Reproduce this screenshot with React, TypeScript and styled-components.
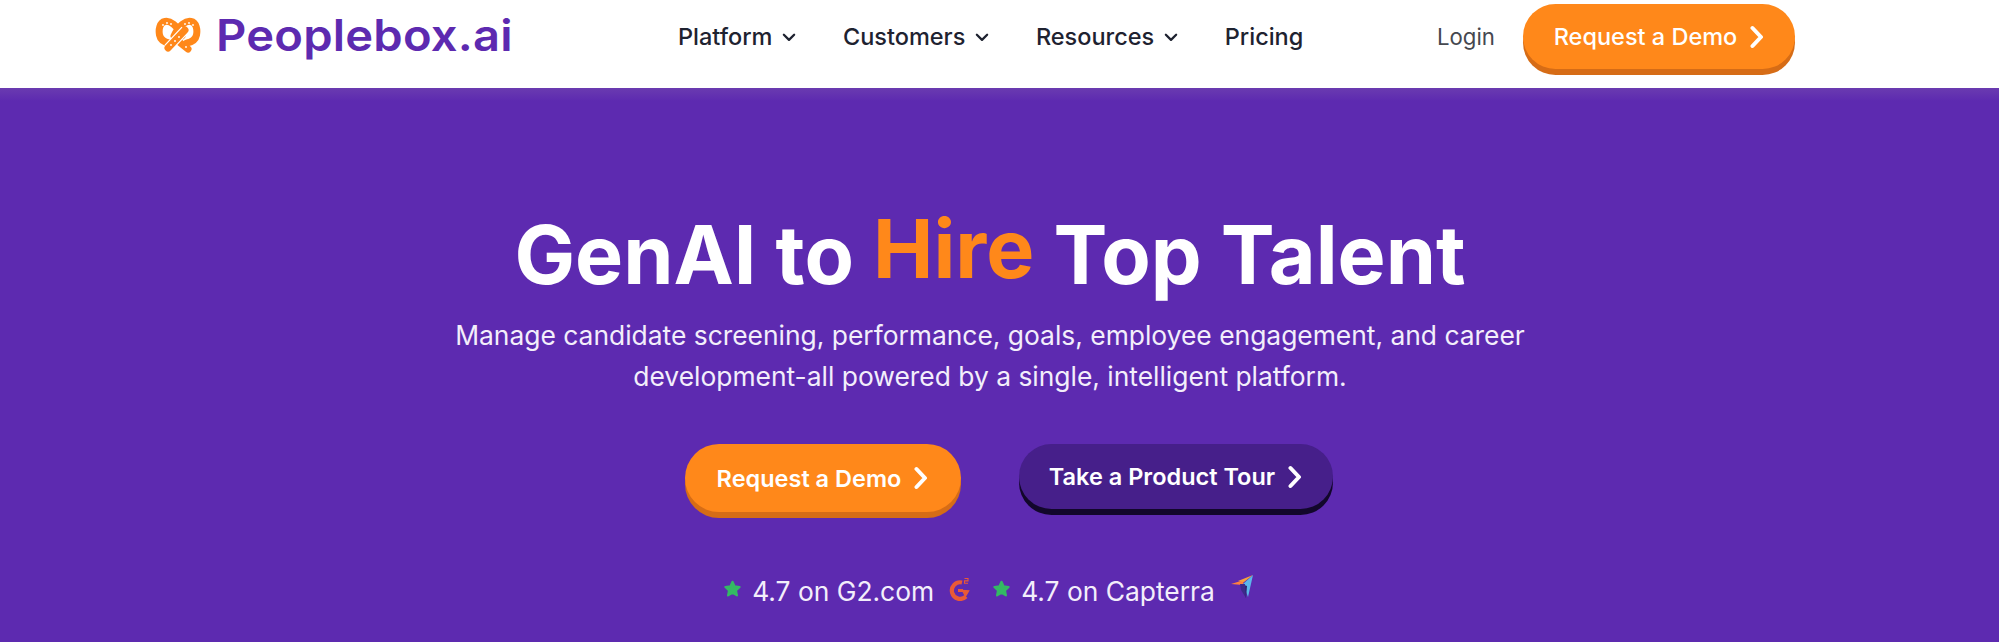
import React from "react";
import styled, { createGlobalStyle } from "styled-components";

const Global = createGlobalStyle`
  html, body { margin: 0; padding: 0; background: #5d2ab0; }
  body { width: 1999px; height: 642px; overflow: hidden; font-family: Inter, "Liberation Sans", sans-serif; }
`;

const Page = styled.div`
  width: 1999px;
  height: 642px;
  display: flex;
  flex-direction: column;
  overflow: hidden;
`;

const Header = styled.header`
  height: 88px;
  flex: none;
  background: #fff;
  display: flex;
  align-items: flex-start;
  padding-left: 155px;
  box-sizing: border-box;
`;

const LogoLink = styled.a`
  display: flex;
  align-items: center;
  gap: 15px;
  width: 523px;
  height: 70px;
  flex: none;
`;

const LogoText = styled.span`
  display: inline-block;
  font-family: Inter, sans-serif;
  font-weight: 600;
  font-size: 44px;
  letter-spacing: 0.2px;
  line-height: 70px;
  color: #5d2ab0;
  transform: scaleX(1.07);
  transform-origin: left center;
`;

const Nav = styled.nav`
  display: flex;
  align-items: center;
  gap: 45.5px;
  height: 73px;
  width: 759px;
  flex: none;
`;

const NavItem = styled.a`
  display: flex;
  align-items: center;
  gap: 9px;
  font-size: 23.5px;
  font-weight: 450;
  color: #1e2230;
`;

const Login = styled.a`
  width: 86px;
  flex: none;
  height: 74px;
  line-height: 74px;
  font-size: 22.2px;
  color: #45484f;
`;

const Button = styled.a<{ $dark?: boolean; $w: number; $h: number }>`
  display: flex;
  align-items: center;
  justify-content: center;
  gap: 13px;
  flex: none;
  box-sizing: border-box;
  width: ${(p) => p.$w}px;
  height: ${(p) => p.$h}px;
  border-radius: 36px;
  background: ${(p) => (p.$dark ? "#461f8a" : "#ff881a")};
  box-shadow: 0 6px 0 ${(p) => (p.$dark ? "#12072b" : "#d66c16")};
  color: #fff;
  font-size: 23.5px;
  font-weight: 600;
`;

const HeaderButton = styled(Button)`
  margin: 4px 0 0 0;
  font-weight: 500;
`;

const Hero = styled.main`
  flex: 1;
  background: linear-gradient(#6a3bb0 0, #5d2ab0 13px);
  display: flex;
  flex-direction: column;
  align-items: center;
  padding-top: 127px;
  box-sizing: border-box;
`;

const Title = styled.h1`
  margin: 0 19px 0 0;
  font-size: 80.8px;
  line-height: 80px;
  height: 80px;
  font-weight: 700;
  color: #fff;
  white-space: pre;
`;

const Accent = styled.span`
  display: inline-block;
  color: #ff881a;
  transform: translateY(-6px);
`;

const Subtitle = styled.p`
  margin: 20px 19px 0 0;
  width: 1100px;
  font-size: 26.4px;
  line-height: 40.5px;
  text-align: center;
  color: #f3eefb;
`;

const Actions = styled.div`
  display: flex;
  gap: 58px;
  margin: 48px 0 0 18px;
  align-items: flex-start;
`;

const Ratings = styled.div`
  display: flex;
  align-items: center;
  margin: 59px 21px 0 0;
  font-size: 26.4px;
  color: #f3eefb;
  height: 40px;
`;

const Rating = styled.div`
  display: flex;
  align-items: center;
  gap: 11px;
`;

const RatingLabel = styled.span`
  margin-right: 4px;
`;

const BadgeIcon = styled.svg<{ $lift?: number }>`
  margin-top: ${(p) => p.$lift ?? -5}px;
  flex: none;
`;

const RatingGap = styled.div`
  width: 22px;
  flex: none;
`;

const Chevron = ({ size = 16 }: { size?: number }) => (
  <svg width={size} height={size} viewBox="0 0 14 14" fill="none" stroke="#1e2230" strokeWidth="2" strokeLinecap="round" strokeLinejoin="round">
    <path d="M2.5 5l4.5 4.5L11.5 5" />
  </svg>
);

const Arrow = () => (
  <svg width="14" height="24" viewBox="0 0 14 24" fill="none" stroke="#fff" strokeWidth="4" strokeLinecap="round" strokeLinejoin="round">
    <path d="M2.5 3l8.5 9-8.5 9" />
  </svg>
);

const Star = () => (
  <BadgeIcon $lift={-6} width="17" height="17" viewBox="0 0 24 24" fill="#34b964">
    <path d="M12 2.5l3 6.5 7 .9-5.1 4.8 1.4 7L12 18.2l-6.3 3.5 1.4-7L2 9.9l7-.9z" stroke="#34b964" strokeWidth="3" strokeLinejoin="round" />
  </BadgeIcon>
);

const Pretzel = () => (
  <svg width="46" height="36" viewBox="0 0 46 36" fill="none">
    <g stroke="#ff881a" strokeLinecap="round" fill="none">
      <path d="M27 19 C22 8 15 3.5 10 4.5 C4.5 5.5 3.5 13 4.5 18 C5.5 23 9 25 14 26" strokeWidth="7" />
      <path d="M19 19 C24 8 31 3.5 36 4.5 C41.5 5.5 42.5 13 41.5 18 C40.5 23 37 25 32 26" strokeWidth="7" />
      <path d="M23 24 L33 32" strokeWidth="7" />
      <path d="M30 13 L13 31" stroke="#fff" strokeWidth="9.5" strokeLinecap="butt" />
      <path d="M30 13 L13 31" strokeWidth="7" />
    </g>
    <g fill="#fff">
      <circle cx="8" cy="8" r=".9" /><circle cx="12" cy="6" r=".9" /><circle cx="16" cy="7" r=".9" />
      <circle cx="30" cy="7" r=".9" /><circle cx="34" cy="6" r=".9" /><circle cx="38" cy="8" r=".9" />
      <circle cx="16" cy="28" r=".9" /><circle cx="20" cy="24" r=".9" /><circle cx="24" cy="20" r=".9" /><circle cx="31" cy="30" r=".9" />
    </g>
  </svg>
);

const G2 = () => (
  <BadgeIcon width="22" height="24" viewBox="0 0 22 24" fill="none">
    <path d="M13 5.5 A8.3 8.3 0 1 0 17 19.5" stroke="#ea5a35" strokeWidth="4.2" />
    <path d="M9 13.5h5" stroke="#ea5a35" strokeWidth="3" />
    <path d="M13.5 13.5l3 5.5 3-5z" fill="#ea5a35" stroke="#ea5a35" strokeWidth="1.5" />
    <path d="M15.5 1.5h3.5v2.4h-3.5v2.4h3.5" stroke="#ea5a35" strokeWidth="1.1" />
  </BadgeIcon>
);

const Capterra = () => (
  <BadgeIcon $lift={-9} width="24" height="26" viewBox="0 0 24 26">
    <path d="M1 10l13-4-1 5z" fill="#ff7f3e" />
    <path d="M8 7L23 1 14 8z" fill="#f7a23b" />
    <path d="M13 10L23 1l-5 22z" fill="#5cb7ea" />
    <path d="M11 10l6 2-1 12z" fill="#2a2470" />
    <path d="M10 10l5 0 1 14-5-8z" fill="#3d2a8a" />
  </BadgeIcon>
);

export default function App() {
  return (
    <Page>
      <Global />
      <Header>
        <LogoLink>
          <Pretzel />
          <LogoText>Peoplebox.ai</LogoText>
        </LogoLink>
        <Nav>
          <NavItem>Platform <Chevron /></NavItem>
          <NavItem>Customers <Chevron /></NavItem>
          <NavItem>Resources <Chevron /></NavItem>
          <NavItem>Pricing</NavItem>
        </Nav>
        <Login>Login</Login>
        <HeaderButton $w={272} $h={65}>Request a Demo <Arrow /></HeaderButton>
      </Header>
      <Hero>
        <Title>GenAI to <Accent>Hire</Accent> Top Talent</Title>
        <Subtitle>
          Manage candidate screening, performance, goals, employee engagement, and career
          <br />
          development-all powered by a single, intelligent platform.
        </Subtitle>
        <Actions>
          <Button $w={276} $h={68}>Request a Demo <Arrow /></Button>
          <Button $dark $w={314} $h={65}>Take a Product Tour <Arrow /></Button>
        </Actions>
        <Ratings>
          <Rating><Star /><RatingLabel>4.7 on G2.com</RatingLabel><G2 /></Rating>
          <RatingGap />
          <Rating><Star /><RatingLabel>4.7 on Capterra</RatingLabel><Capterra /></Rating>
        </Ratings>
      </Hero>
    </Page>
  );
}
